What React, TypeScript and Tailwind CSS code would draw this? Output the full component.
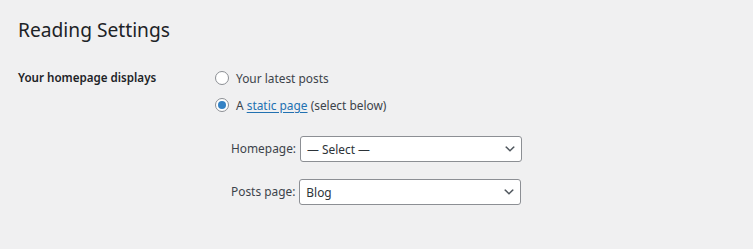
function Radio({ checked }: { checked?: boolean }) {
  return (
    <span className="flex h-[14px] w-[14px] shrink-0 items-center justify-center rounded-full border border-[#8c8f94] bg-white">
      {checked && <span className="h-[8px] w-[8px] rounded-full bg-[#3582c4]" />}
    </span>
  );
}

function Select({ value }: { value: string }) {
  return (
    <div className="relative h-[26px] w-[222px]">
      <select
        defaultValue={value}
        className="h-full w-full appearance-none rounded-[3px] border border-[#8c8f94] bg-white pl-[6px] pr-[22px] text-[11.9px] leading-[24px] text-[#2c3338] outline-none"
      >
        <option>{value}</option>
      </select>
      <svg
        viewBox="0 0 20 20"
        className="pointer-events-none absolute right-[5px] top-[6px] h-[14px] w-[14px]"
        fill="#50575e"
      >
        <path d="M5 6l5 5 5-5 2 1-7 7-7-7 2-1z" />
      </svg>
    </div>
  );
}

export default function App() {
  return (
    <div
      className="min-h-[249px] w-full bg-[#f0f0f1] px-[18px] text-[11.9px] text-[#3c434a]"
      style={{ fontFamily: "'Noto Sans', sans-serif" }}
    >
      <h1 className="pt-[17px] text-[19.2px] font-normal leading-[26px] text-[#1d2327]">Reading Settings</h1>
      <div className="mt-[26px] flex">
        <div className="w-[197px] shrink-0 text-[11.6px] font-semibold leading-[18px] text-[#1d2327]">
          Your homepage displays
        </div>
        <div className="flex flex-col">
          <label className="flex h-[18px] items-center gap-[7px] leading-[18px]">
            <Radio />
            <span>Your latest posts</span>
          </label>
          <label className="mt-[9px] flex h-[18px] items-center gap-[7px] leading-[18px]">
            <Radio checked />
            <span>
              A{" "}
              <a href="#" className="text-[#2271b1] underline underline-offset-[2px]">
                static page
              </a>{" "}
              (select below)
            </span>
          </label>
          <div className="ml-[16px] mt-[22px] flex flex-col gap-[17px]">
            <div className="flex items-center gap-[4px]">
              <span>Homepage:</span>
              <Select value="— Select —" />
            </div>
            <div className="flex items-center gap-[4px]">
              <span>Posts page:</span>
              <Select value="Blog" />
            </div>
          </div>
        </div>
      </div>
    </div>
  );
}
